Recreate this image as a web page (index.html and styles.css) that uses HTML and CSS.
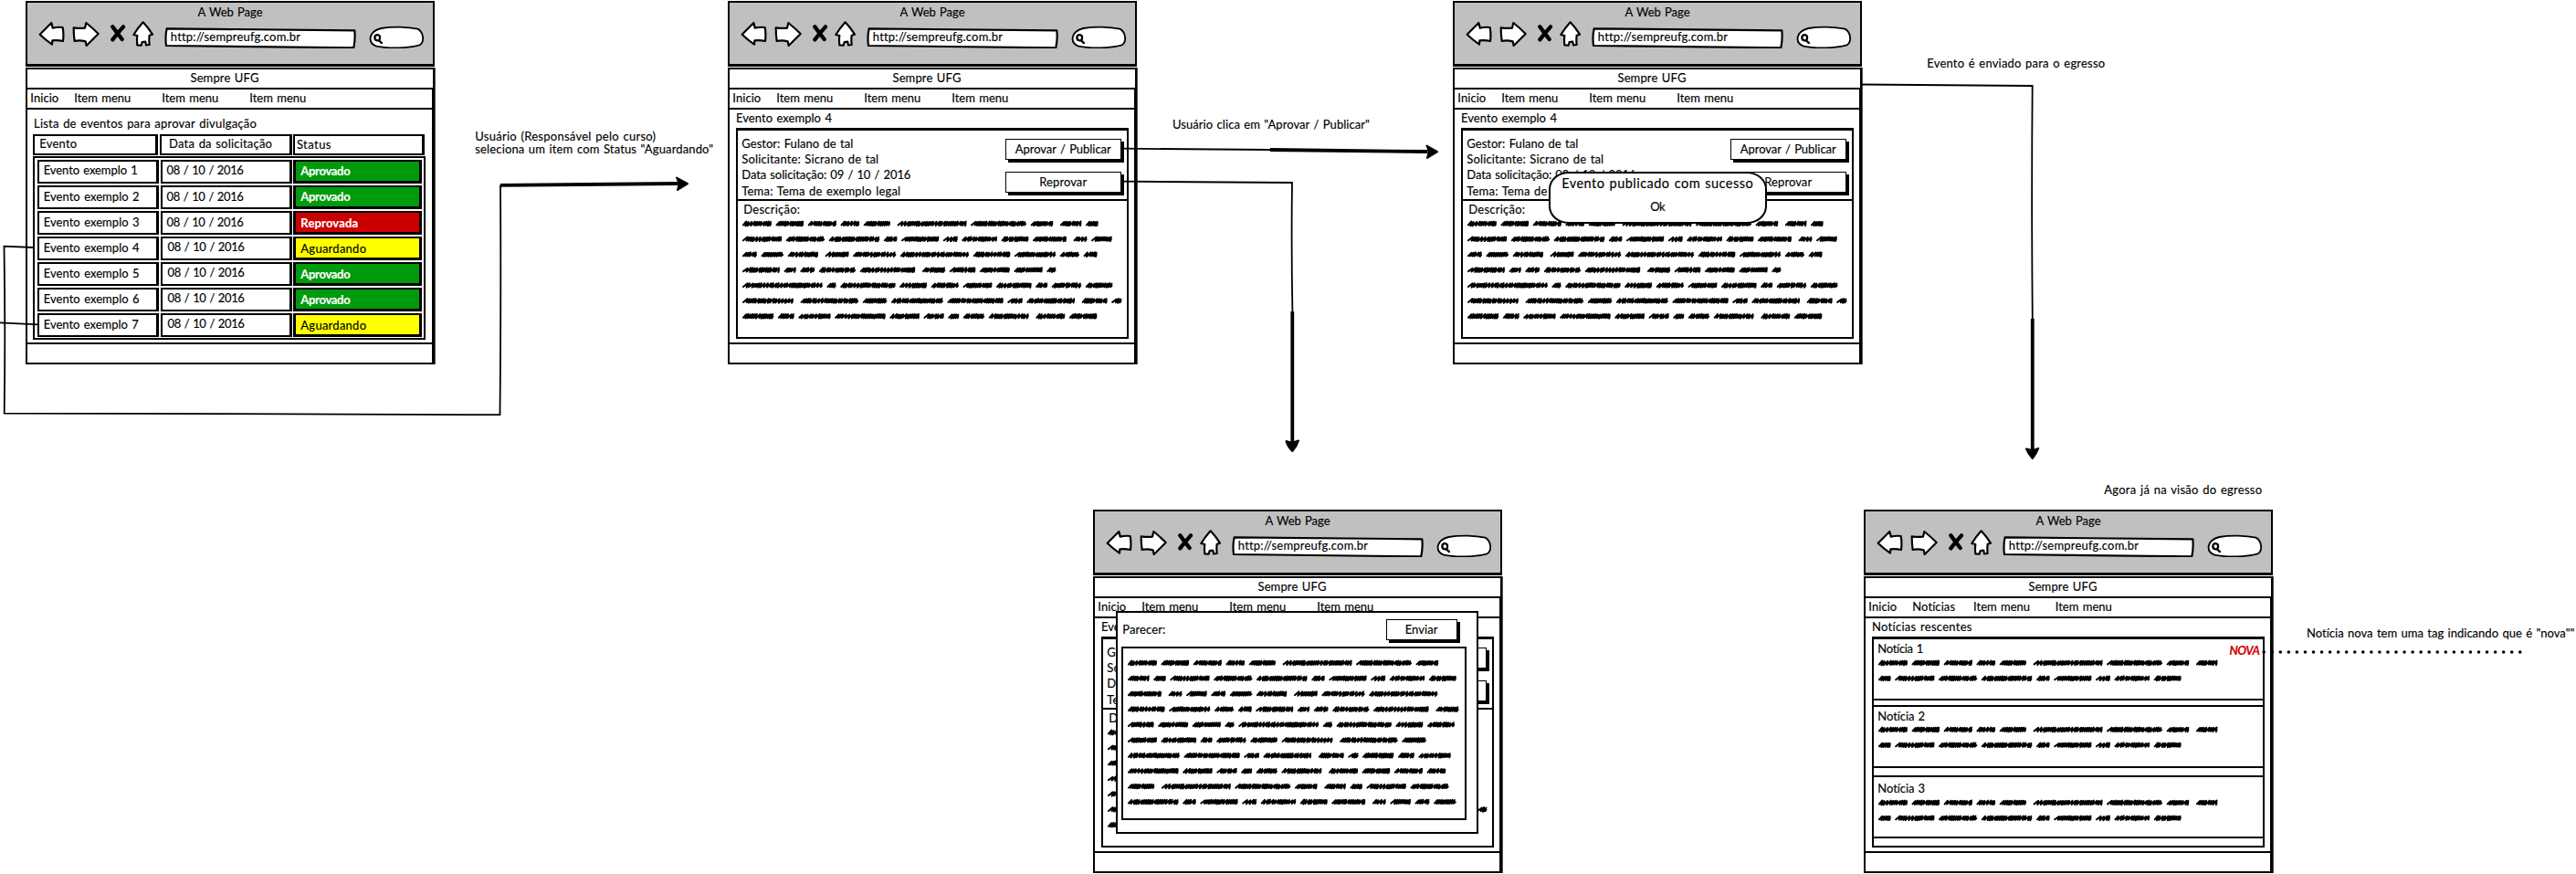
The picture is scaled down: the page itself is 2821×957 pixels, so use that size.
FILE: index.html
```html
<!DOCTYPE html>
<html lang="pt-BR">
<head>
<meta charset="utf-8">
<title>Sempre UFG - fluxo de eventos</title>
<link rel="stylesheet" href="styles.css">
</head>
<body>
<svg class="defs" width="0" height="0">
  <symbol id="i-back" viewBox="126 68 87 92"><path class="ink" d="M131 112L169 74Q172 82 173 91Q190 87 206 89Q210 110 207 134Q190 130 172 132L171 145Q150 130 131 112Z"/></symbol>
  <symbol id="i-fwd" viewBox="237 68 90 92"><path class="ink" d="M242 90Q260 93 279 91L283 74Q304 91 323 110L284 149L281 135Q262 130 245 134Q242 112 242 90Z"/></symbol>
  <symbol id="i-stop" viewBox="360 68 53 92"><path class="fat" d="M370 87Q382 104 401 128M405 87Q386 108 370 129"/></symbol>
  <symbol id="i-home" viewBox="436 68 69 92"><path class="ink" d="M471 72Q453 92 440 113L452 116Q450 132 452 147L465 148L468 137L479 136L481 147L492 146Q490 130 492 115L502 112Q488 90 471 72Z"/></symbol>
  <symbol id="i-url" viewBox="541 68 630 92"><path class="ink" d="M549 93Q850 97 1166 99Q1169 125 1163 156Q850 152 547 149Q543 120 549 93Z"/></symbol>
  <symbol id="i-search" viewBox="1212 68 182 92"><path class="ink thin" d="M1252 92C1290 85 1340 87 1372 94C1391 104 1396 135 1379 147C1340 158 1275 159 1237 151C1208 140 1208 104 1252 92Z"/><path class="lens" d="M1248 124C1248 136 1231 134 1231 122C1232 110 1250 110 1248 124ZM1244 131L1254 140"/></symbol>
</svg>

<main class="board">

  <section class="window w1">
    <header class="chrome">
      <h2 class="chrome-title"><span data-w="71">A Web Page</span></h2>
      <div class="toolbar"><svg class="back"><use href="#i-back"/></svg><svg class="fwd"><use href="#i-fwd"/></svg><svg class="stop"><use href="#i-stop"/></svg><svg class="home"><use href="#i-home"/></svg><div class="url"><svg><use href="#i-url"/></svg><span data-w="142">http://sempreufg.com.br</span></div><svg class="search"><use href="#i-search"/></svg></div>
    </header>
    <div class="site"><span data-w="75">Sempre UFG</span></div>
    <nav class="menu"><span data-w="31">Inicio</span><span data-w="62">Item menu</span><span data-w="62">Item menu</span><span data-w="62">Item menu</span></nav>
    <div class="content list">
      <h3><span data-w="244">Lista de eventos para aprovar divulgação</span></h3>
      <div class="thead"><div class="cell"><span data-w="41">Evento</span></div><div class="cell date"><span data-w="113">Data da solicitação</span></div><div class="cell stat"><span data-w="38">Status</span></div></div>
      <div class="tbody">
        <div class="cell"><span data-w="103">Evento exemplo 1</span></div><div class="cell"><span data-w="84">08 / 10 / 2016</span></div><div class="cell tag green"><span data-w="54">Aprovado</span></div>
        <div class="cell"><span data-w="105">Evento exemplo 2</span></div><div class="cell"><span data-w="84">08 / 10 / 2016</span></div><div class="cell tag green"><span data-w="54">Aprovado</span></div>
        <div class="cell"><span data-w="105">Evento exemplo 3</span></div><div class="cell"><span data-w="84">08 / 10 / 2016</span></div><div class="cell tag red"><span data-w="63">Reprovada</span></div>
        <div class="cell"><span data-w="105">Evento exemplo 4</span></div><div class="cell up"><span data-w="84">08 / 10 / 2016</span></div><div class="cell tag yellow"><span data-w="72">Aguardando</span></div>
        <div class="cell"><span data-w="105">Evento exemplo 5</span></div><div class="cell up"><span data-w="84">08 / 10 / 2016</span></div><div class="cell tag green"><span data-w="54">Aprovado</span></div>
        <div class="cell"><span data-w="105">Evento exemplo 6</span></div><div class="cell up"><span data-w="84">08 / 10 / 2016</span></div><div class="cell tag green"><span data-w="54">Aprovado</span></div>
        <div class="cell"><span data-w="104">Evento exemplo 7</span></div><div class="cell up"><span data-w="84">08 / 10 / 2016</span></div><div class="cell tag yellow"><span data-w="72">Aguardando</span></div>
      </div>
    </div>
    <footer class="foot"></footer>
  </section>

  <section class="window w2">
    <header class="chrome">
      <h2 class="chrome-title"><span data-w="71">A Web Page</span></h2>
      <div class="toolbar"><svg class="back"><use href="#i-back"/></svg><svg class="fwd"><use href="#i-fwd"/></svg><svg class="stop"><use href="#i-stop"/></svg><svg class="home"><use href="#i-home"/></svg><div class="url"><svg><use href="#i-url"/></svg><span data-w="142">http://sempreufg.com.br</span></div><svg class="search"><use href="#i-search"/></svg></div>
    </header>
    <div class="site"><span data-w="75">Sempre UFG</span></div>
    <nav class="menu"><span data-w="31">Inicio</span><span data-w="62">Item menu</span><span data-w="62">Item menu</span><span data-w="62">Item menu</span></nav>
    <div class="content">
      <h3><span data-w="105">Evento exemplo 4</span></h3>
      <div class="panel">
        <div class="info">
          <div class="facts"><p><span data-w="122">Gestor: Fulano de tal</span></p><p><span data-w="150">Solicitante: Sicrano de tal</span></p><p><span data-w="185">Data solicitação: 09 / 10 / 2016</span></p><p><span data-w="174">Tema: Tema de exemplo legal</span></p></div>
          <div class="actions"><div class="button"><span data-w="105">Aprovar / Publicar</span></div><div class="button"><span data-w="52">Reprovar</span></div></div>
        </div>
        <p class="desc"><span data-w="62">Descrição:</span></p>
        <svg class="scribble" data-lines="10,11,10,10,10,9,11"></svg>
      </div>
    </div>
    <footer class="foot"></footer>
  </section>

  <section class="window w3">
    <header class="chrome">
      <h2 class="chrome-title"><span data-w="71">A Web Page</span></h2>
      <div class="toolbar"><svg class="back"><use href="#i-back"/></svg><svg class="fwd"><use href="#i-fwd"/></svg><svg class="stop"><use href="#i-stop"/></svg><svg class="home"><use href="#i-home"/></svg><div class="url"><svg><use href="#i-url"/></svg><span data-w="142">http://sempreufg.com.br</span></div><svg class="search"><use href="#i-search"/></svg></div>
    </header>
    <div class="site"><span data-w="75">Sempre UFG</span></div>
    <nav class="menu"><span data-w="31">Inicio</span><span data-w="62">Item menu</span><span data-w="62">Item menu</span><span data-w="62">Item menu</span></nav>
    <div class="content">
      <h3><span data-w="105">Evento exemplo 4</span></h3>
      <div class="panel">
        <div class="info">
          <div class="facts"><p><span data-w="122">Gestor: Fulano de tal</span></p><p><span data-w="150">Solicitante: Sicrano de tal</span></p><p><span data-w="185">Data solicitação: 09 / 10 / 2016</span></p><p><span data-w="174">Tema: Tema de exemplo legal</span></p></div>
          <div class="actions"><div class="button"><span data-w="105">Aprovar / Publicar</span></div><div class="button"><span data-w="52">Reprovar</span></div></div>
        </div>
        <p class="desc"><span data-w="62">Descrição:</span></p>
        <svg class="scribble" data-lines="10,11,10,10,10,9,11"></svg>
      </div>
    </div>
    <footer class="foot"></footer>
    <div class="alert"><p class="alert-text"><span data-w="210">Evento publicado com sucesso</span></p><p><span data-w="16">Ok</span></p></div>
  </section>

  <section class="window w4">
    <header class="chrome">
      <h2 class="chrome-title"><span data-w="71">A Web Page</span></h2>
      <div class="toolbar"><svg class="back"><use href="#i-back"/></svg><svg class="fwd"><use href="#i-fwd"/></svg><svg class="stop"><use href="#i-stop"/></svg><svg class="home"><use href="#i-home"/></svg><div class="url"><svg><use href="#i-url"/></svg><span data-w="142">http://sempreufg.com.br</span></div><svg class="search"><use href="#i-search"/></svg></div>
    </header>
    <div class="site"><span data-w="75">Sempre UFG</span></div>
    <nav class="menu"><span data-w="31">Inicio</span><span data-w="62">Item menu</span><span data-w="62">Item menu</span><span data-w="62">Item menu</span></nav>
    <div class="content">
      <h3><span data-w="105">Evento exemplo 4</span></h3>
      <div class="panel">
        <div class="info">
          <div class="facts"><p><span data-w="122">Gestor: Fulano de tal</span></p><p><span data-w="150">Solicitante: Sicrano de tal</span></p><p><span data-w="185">Data solicitação: 09 / 10 / 2016</span></p><p><span data-w="174">Tema: Tema de exemplo legal</span></p></div>
          <div class="actions"><div class="button"><span data-w="105">Aprovar / Publicar</span></div><div class="button"><span data-w="52">Reprovar</span></div></div>
        </div>
        <p class="desc"><span data-w="62">Descrição:</span></p>
        <svg class="scribble" data-lines="10,11,10,10,10,9,11"></svg>
      </div>
    </div>
    <footer class="foot"></footer>
    <div class="modal">
      <div class="modal-head"><span data-w="47">Parecer:</span><div class="button"><span data-w="36">Enviar</span></div></div>
      <div class="field"><svg class="scribble" data-lines="8,10,9,10,9,8,9,10,8,11"></svg></div>
    </div>
  </section>

  <section class="window w5">
    <header class="chrome">
      <h2 class="chrome-title"><span data-w="71">A Web Page</span></h2>
      <div class="toolbar"><svg class="back"><use href="#i-back"/></svg><svg class="fwd"><use href="#i-fwd"/></svg><svg class="stop"><use href="#i-stop"/></svg><svg class="home"><use href="#i-home"/></svg><div class="url"><svg><use href="#i-url"/></svg><span data-w="142">http://sempreufg.com.br</span></div><svg class="search"><use href="#i-search"/></svg></div>
    </header>
    <div class="site"><span data-w="75">Sempre UFG</span></div>
    <nav class="menu news-menu"><span data-w="31">Inicio</span><span data-w="47">Notícias</span><span data-w="62">Item menu</span><span data-w="62">Item menu</span></nav>
    <div class="content">
      <h3><span data-w="110">Notícias rescentes</span></h3>
      <div class="panel">
        <article class="news n1"><div class="news-head"><span data-w="50">Notícia 1</span><span class="new" data-w="33">NOVA</span></div><svg class="scribble" data-lines="9,9"></svg></article>
        <article class="news n2"><div class="news-head"><span data-w="52">Notícia 2</span></div><svg class="scribble" data-lines="9,9"></svg></article>
        <article class="news n3"><div class="news-head"><span data-w="52">Notícia 3</span></div><svg class="scribble" data-lines="9,9"></svg></article>
      </div>
    </div>
    <footer class="foot"></footer>
  </section>

  <p class="note note-select"><span data-w="198">Usuário (Responsável pelo curso)</span><br><span data-w="261">seleciona um item com Status "Aguardando"</span></p>
  <p class="note note-click"><span data-w="216">Usuário clica em "Aprovar / Publicar"</span></p>
  <p class="note note-sent"><span data-w="195">Evento é enviado para o egresso</span></p>
  <p class="note note-view"><span data-w="173">Agora já na visão do egresso</span></p>
  <p class="note note-tag"><span data-w="293.5">Notícia nova tem uma tag indicando que é "nova""</span></p>

  <svg class="links" width="2821" height="957">
    <path class="line" d="M37 271L4.5 269.7Q6 360 4.7 452.6L250 453.2L547.5 454.2Q548.8 320 548 202.5"/>
    <path class="line" d="M0 353.4L42 355.3"/>
    <path class="bold" d="M548 202.8L742 201"/>
    <path class="tip" d="M741 194.5Q745 201 742 208L753 201.2Z"/>
    <path class="line" d="M1230 162.7L1391 164"/>
    <path class="bold" d="M1391 164L1563 166"/>
    <path class="tip" d="M1562.5 159.5Q1566 166 1563 173L1574 166.2Z"/>
    <path class="line" d="M1230 198.7L1415 200Q1414 270 1415.4 341"/>
    <path class="bold" d="M1415.3 341L1415.3 484"/>
    <path class="tip" d="M1408.5 483Q1415 486 1422 482.5Q1420 489 1415.3 494Q1410 489 1408.5 483Z"/>
    <path class="line" d="M2039 92.5L2225.7 94Q2224.6 220 2225.8 349"/>
    <path class="bold" d="M2225.8 349L2225.8 492"/>
    <path class="tip" d="M2219 491.5Q2226 494 2232.3 491Q2230 497 2225.8 502Q2221 497 2219 491.5Z"/>
    <path class="dots" d="M2479.2 714H2760.4"/>
  </svg>
</main>
<script src="sketch.js"></script>
</body>
</html>
```
FILE: styles.css
```css
* { box-sizing: border-box; }
body { margin: 0; background: #fff; color: #000; font: 13px/16px Lato, "Open Sans", sans-serif; word-spacing: 1px; }
h2, h3, p { margin: 0; font-size: inherit; font-weight: 400; }
[data-w] { display: inline-block; white-space: nowrap; flex: none; -webkit-text-stroke: 0.15px currentColor; }
.defs { position: absolute; }
.board { position: relative; width: 2821px; height: 957px; overflow: hidden; }

.ink { fill: #fff; stroke: #000; stroke-width: 6.5; stroke-linejoin: round; }
.thin { stroke-width: 5.5; }
.fat { fill: none; stroke: #000; stroke-width: 13; stroke-linecap: round; }
.lens { fill: none; stroke: #000; stroke-width: 7; stroke-linecap: round; }

/* browser windows on the canvas */
.window { position: absolute; display: flex; flex-direction: column; width: 448px; height: 399px; padding-top: 1px; }
.w1 { left: 28px; top: 0; }
.w2 { left: 797px; top: 0; }
.w3 { left: 1591px; top: 0; }
.w4 { left: 1197px; top: 557px; }
.w5 { left: 2041px; top: 557px; }

.chrome { height: 72px; background: #c0c0c0; border: 2px solid #000; border-bottom-width: 3px; padding-top: 2px; }
.chrome-title { text-align: center; line-height: 16px; }
.toolbar { display: flex; margin-top: 1.7px; padding-left: 12px; height: 30.7px; }
.toolbar svg { display: block; height: 30.7px; flex: none; }
.back { width: 29px; margin-right: 8px; }
.fwd { width: 30px; margin-right: 11px; }
.stop { width: 17.7px; margin-right: 7.6px; }
.home { width: 23px; margin-right: 12px; }
.url { position: relative; width: 210px; margin-right: 13.7px; padding: 9.4px 0 0 6.5px; }
.url svg { position: absolute; left: 0; top: 0; width: 210px; }
.url span { position: relative; }
.search { width: 60.7px; }

.site, .menu, .content, .foot { background: #fff; border: 2px solid #000; box-shadow: 1px 0 #555; }
.site { height: 24px; margin-top: 1px; padding: 1px 7px 0 0; text-align: center; }
.site span { margin-right: 5px; }
.menu { display: flex; height: 24px; margin-top: -2px; padding: 1px 0 0 3.3px; gap: 34px; border-right-width: 3px; }
.menu span:first-child { margin-right: -17px; }
.news-menu { gap: 27.7px; }
.news-menu span:first-child { margin-right: -10.7px; }
.news-menu span:nth-child(2) { margin-right: -7.7px; }
.content { height: 259px; margin-top: -2px; border-right-width: 3px; padding: 1.3px 0 0 7px; }
.content h3 { height: 16px; }
.foot { height: 24px; margin-top: -2px; border-right-width: 3px; }

/* event list */
.list { padding-top: 7px; }
.thead { display: grid; grid-template-columns: 137px 145px 144px; column-gap: 1.3px; margin: 3.5px 0 0 -0.7px; height: 23.7px; }
.tbody { display: grid; grid-template-columns: 133px 144px 141px; grid-auto-rows: 26px; gap: 2.1px 1.8px; width: 430px; height: 200.5px; margin: 1px 0 0 -0.7px; border: 2px solid #000; padding: 1.5px 0 0 2.4px; }
.cell { border: 2px solid #000; border-right-width: 3px; padding: 1.8px 0 0 5px; background: #fff; }
.thead .cell { padding-top: 0.5px; }
.thead .date { padding-left: 8.5px; }
.thead .stat { padding: 1px 0 0 2px; }
.tag { padding-top: 2.7px; border-left-width: 3px; border-bottom-width: 3px; }
.up span { position: relative; top: -0.6px; left: 1px; }
.green, .red { color: #fff; font-weight: 700; }
.green { background: #009a0d; }
.red { background: #c00; }
.yellow { background: #ff0; }

/* event detail */
.panel { width: 430px; height: 231px; margin-top: 3px; border: 2px solid #000; border-top-width: 3px; }
.info { display: flex; justify-content: space-between; height: 76.5px; border-bottom: 2px solid #000; padding: 5.4px 6.5px 0 4.3px; }
.facts p { height: 17.35px; }
.actions { display: flex; flex-direction: column; gap: 12.5px; padding-top: 3px; }
.button { width: 126.5px; height: 23.5px; border: 1.5px solid #000; background: #fff; text-align: center; padding-top: 2.6px; box-shadow: 3px 3px #000; }
.desc { height: 16px; margin: 1.5px 0 0 6.3px; }
.scribble { display: block; overflow: visible; fill: none; stroke: #000; stroke-width: 2; stroke-linecap: round; stroke-linejoin: round; }
.desc + .scribble { margin: 1px 0 0 5.3px; }

.alert { position: absolute; left: 104.7px; top: 187.7px; width: 239px; height: 57.5px; background: #fff; border: 2px solid #000; border-radius: 22px / 19px; text-align: center; padding-top: 3.5px; }
.alert-text { font-size: 14.5px; height: 25.3px; }

.modal { position: absolute; left: 24.7px; top: 111.7px; width: 397px; height: 244.5px; background: #fff; border: 2px solid #000; padding: 7px 4px 0; }
.modal-head { display: flex; justify-content: space-between; padding: 0 17px 0 1.6px; height: 30.6px; }
.modal-head > span { margin-top: 3px; }
.modal .button { width: 78px; }
.field { width: 378.5px; height: 190px; border: 2px solid #000; padding: 8.9px 0 0 5.5px; }

/* news feed */
.news { padding-left: 4.3px; border-bottom: 2px solid #000; height: 67px; }
.n2 { margin-top: 5px; height: 69px; border-top: 2px solid #000; }
.n3 { margin-top: 8px; height: 68.5px; border-top: 2px solid #000; }
.news-head { display: flex; justify-content: space-between; height: 18px; padding: 2.1px 3.5px 0 0; }
.n2 .news-head { height: 16.6px; padding-top: 1.4px; }
.n3 .news-head { height: 19.5px; padding-top: 3.6px; }
.new { color: #c00; font-weight: 700; font-style: italic; margin-top: 2px; }
.news .scribble { margin: 1px 0 0 1px; }

/* annotations and connectors */
.note { position: absolute; font-size: 13px; line-height: 14px; }
.note-select { left: 520.3px; top: 142.2px; }
.note-click { left: 1284px; top: 129px; }
.note-sent { left: 2110.3px; top: 61.8px; }
.note-view { left: 2304.3px; top: 528.6px; }
.note-tag { left: 2526px; top: 686.2px; }
.links { position: absolute; left: 0; top: 0; fill: none; stroke: #000; }
.line { stroke-width: 1.8; }
.bold { stroke-width: 3.8; }
.tip { fill: #000; stroke-width: 2; stroke-linejoin: round; }
.dots { stroke-width: 3.6; stroke-linecap: round; stroke-dasharray: 0 9.05; }
```
FILE: sketch.js
```js
// Word widths of the squiggle copy in thirds of a pixel; a negative width is followed by a wider gap.
const WORDS = [
  96, 92, 94, 62, -88, 228, 183, -74, 71, 41,
  130, 127, 167, 44, 124, 48, 116, 90, -111, 45, 68,
  48, 74, -100, 78, 142, 226, 122, 136, 64, 45,
  123, 40, 48, 121, -182, 76, 86, 99, 94, 31,
  264, 31, 181, 90, 91, 96, 116, 39, 98, 89,
  -168, 191, 80, 171, 184, 50, -158, 84, 34,
  103, 54, 106, 167, 98, 67, 36, 70, -132
];
const NS = 'http://www.w3.org/2000/svg';

function squiggle(x, y, w, seed) {
  let s = seed * 7919 + 13;
  const rnd = () => (s = (s * 1103515245 + 12345) % 2147483648) / 2147483648;
  const end = x + w - 1;
  let cx = x + 1;
  let d = `M${cx.toFixed(1)} ${(y + 1.4).toFixed(1)}`;
  while (cx < end - 2) {
    const up = 1.8 + rnd() * 0.7;
    const down = 1.5 + rnd() * 0.8;
    const step = rnd() < 0.25 ? 3.6 : 2.3;
    d += `L${Math.min(cx + step + 1, end).toFixed(1)} ${(y - up).toFixed(1)}`;
    cx += step;
    d += `L${Math.min(cx, end - 0.6).toFixed(1)} ${(y + down).toFixed(1)}`;
  }
  return d + `L${end.toFixed(1)} ${(y + 0.2).toFixed(1)}`;
}

document.querySelectorAll('.scribble').forEach(svg => {
  const lines = svg.dataset.lines.split(',').map(Number);
  svg.setAttribute('width', 415);
  svg.setAttribute('height', lines.length * 16.9);
  let k = 0, d = '';
  lines.forEach((count, row) => {
    let x = 0;
    for (let i = 0; i < count; i++, k++) {
      const n = k % WORDS.length;
      const w = Math.abs(WORDS[n]) / 3;
      d += squiggle(x, 7 + row * 16.9, w, n + 1);
      x += w + (WORDS[n] < 0 ? 7.6 : 4.5);
    }
  });
  const path = document.createElementNS(NS, 'path');
  path.setAttribute('d', d);
  svg.appendChild(path);
});

// Track each label out to its drawn width.
document.querySelectorAll('[data-w]').forEach(el => {
  const natural = el.getBoundingClientRect().width;
  const n = el.textContent.length;
  el.style.letterSpacing = ((el.dataset.w - natural) / n).toFixed(3) + 'px';
});
```
